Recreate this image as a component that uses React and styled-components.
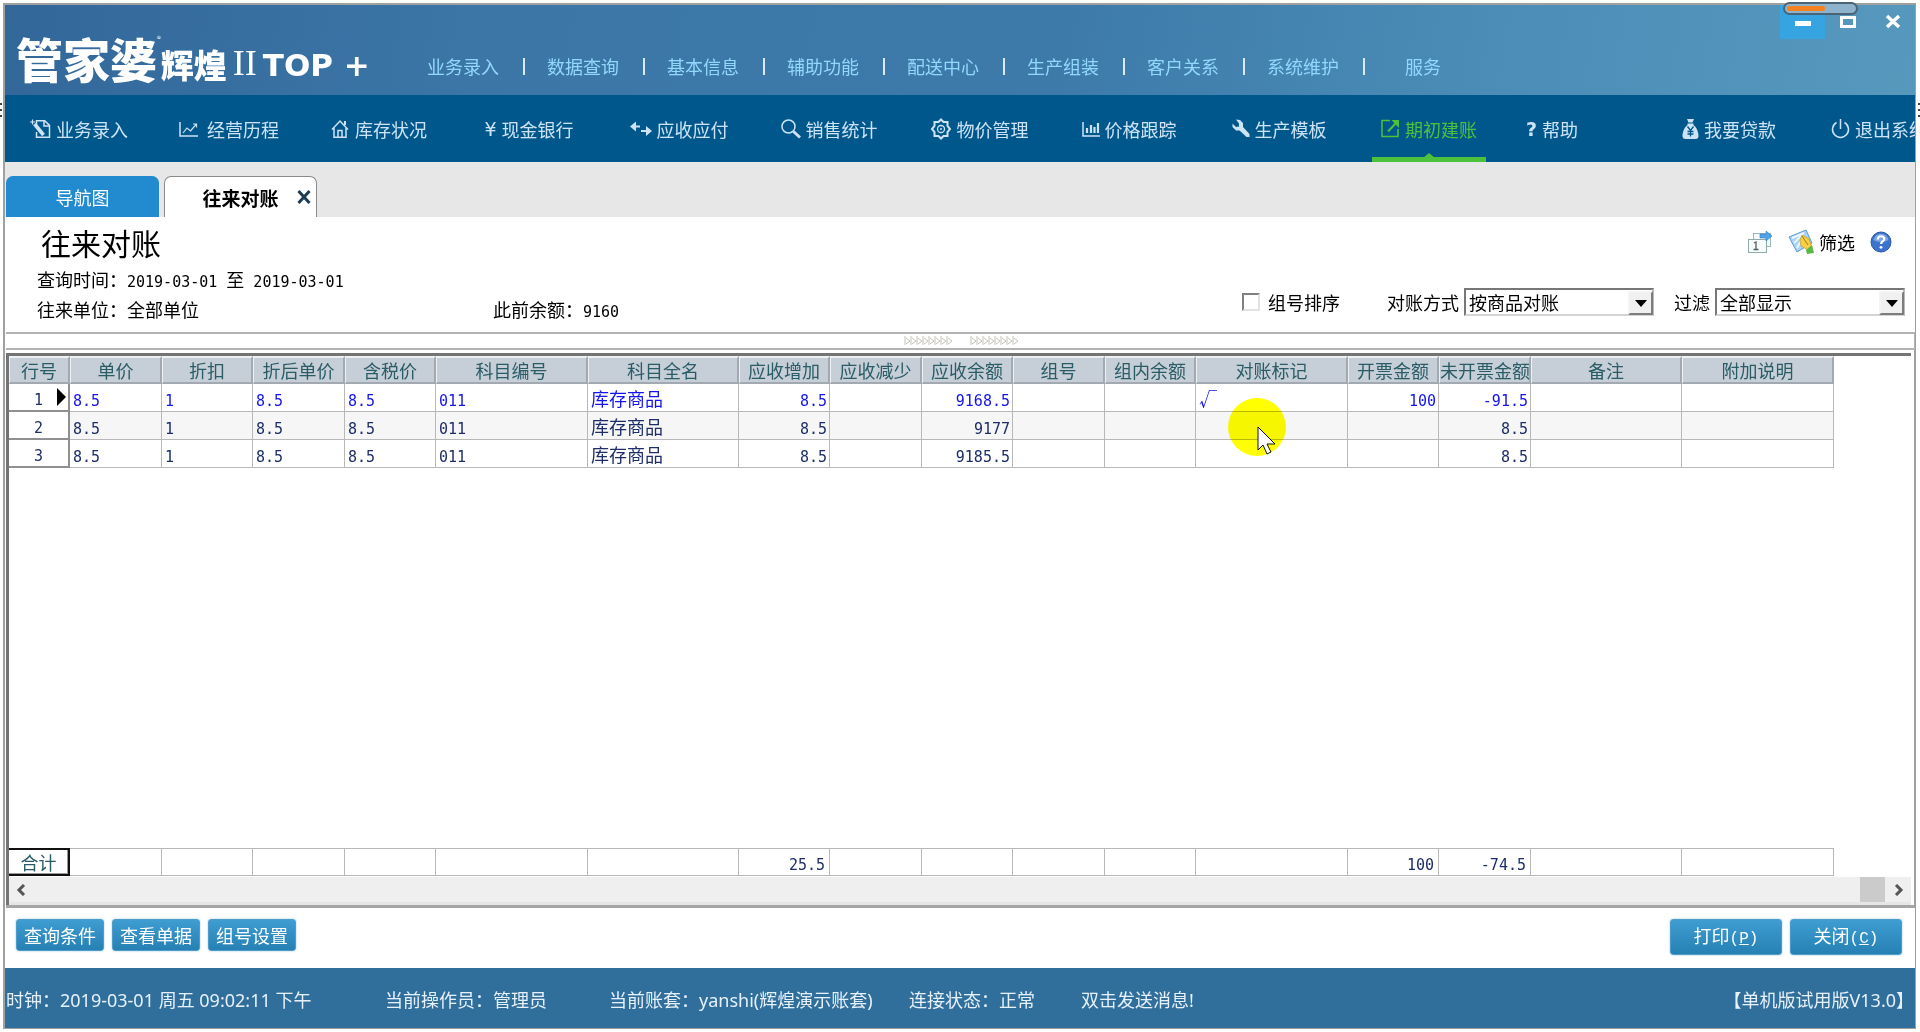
import { Fragment } from 'react';
import styled, { createGlobalStyle, css } from 'styled-components';

const GlobalStyle = createGlobalStyle`
  * {
    box-sizing: border-box;
  }

  body {
    margin: 0;
    background: #fff;
    color: #000;
    font-family: "Noto Sans CJK SC", sans-serif;
    font-size: 18px;
  }

  button, select, input {
    font: inherit;
    color: inherit;
  }
`;

const Page = styled.div`
  position: relative;
  display: flex;
  flex-direction: column;
  min-height: 100vh;
  padding: 3px 4px 3px 3px;
  overflow: hidden;
`;

const Window = styled.div`
  flex: 1;
  display: flex;
  flex-direction: column;
  min-width: 0;
  border: solid #a0a0a0;
  border-width: 2px 1px 1px 2px;
`;

/* Title bar */

const TitleBar = styled.header`
  display: flex;
  justify-content: space-between;
  height: 90px;
  background: linear-gradient(100deg, #33679a 0%, #3b76a7 25%, #3d7aaa 55%, #4b8db7 78%, #5798bd 100%);
`;

const Brand = styled.div`
  display: flex;
  align-items: flex-end;
  width: 422px;
  padding: 0 0 14px 11px;
  color: #fff;
  white-space: nowrap;
  line-height: 1;
`;

const BrandName = styled.span`
  font-size: 47px;
  font-weight: 900;
`;

const Registered = styled.sup`
  align-self: flex-start;
  margin-top: 30px;
  font-size: 8px;
`;

const BrandEdition = styled.span`
  font-size: 33px;
  font-weight: 900;
`;

const BrandNumeral = styled.span`
  padding: 0 6px;
  font-family: "Liberation Serif", serif;
  font-size: 36px;
`;

const BrandTop = styled.span`
  font-family: "DejaVu Sans", sans-serif;
  font-size: 31px;
  font-weight: bold;
`;

const MainMenu = styled.nav`
  display: flex;
  align-items: center;
  flex: 1;
  padding-top: 32px;
`;

const MenuLink = styled.a`
  min-width: 72px;
  color: #92d8fc;
  line-height: 24px;
  text-align: center;
  text-decoration: none;
  white-space: nowrap;
`;

const MenuDivider = styled.span`
  width: 2px;
  height: 17px;
  margin: 0 22px 0 24px;
  background: #d9e9f5;
`;

const WindowButtons = styled.div`
  display: flex;
  align-items: flex-start;
`;

const WindowButton = styled.button`
  display: flex;
  align-items: flex-end;
  justify-content: center;
  width: 45px;
  height: 34px;
  padding: 0 0 8px;
  border: 0;
  background: ${({ $active }) => ($active ? '#36a4e0' : 'transparent')};
`;

/* Toolbar */

const Toolbar = styled.nav`
  display: flex;
  gap: 36px;
  height: 67px;
  padding-left: 17px;
  background: #00578c;
  overflow: hidden;
`;

const Tool = styled.button`
  position: relative;
  display: flex;
  flex: none;
  align-items: center;
  justify-content: center;
  gap: 5px;
  width: ${({ $short }) => ($short ? '60px' : '114px')};
  margin-left: ${({ $apart }) => ($apart ? '54px' : '0')};
  padding: 0;
  border: 0;
  background: none;
  color: ${({ $active }) => ($active ? '#4cc23c' : '#cde4f6')};
  white-space: nowrap;

  ${({ $active }) => $active && css`
    box-shadow: inset 0 -5px #4cc23c;

    &::after {
      content: '';
      position: absolute;
      bottom: 4px;
      left: 50%;
      border: 6px solid transparent;
      border-top: 0;
      border-bottom: 5px solid #4cc23c;
      transform: translateX(-50%);
    }
  `}
`;

const ToolGlyph = styled.span`
  font-family: "DejaVu Sans", sans-serif;
  font-size: 19px;
  font-weight: ${({ $bold }) => ($bold ? 'bold' : 'normal')};
`;

/* Tabs */

const TabStrip = styled.div`
  display: flex;
  align-items: flex-end;
  gap: 5px;
  height: 55px;
  padding-left: 1px;
  background: #e7e7e7;
`;

const Tab = styled.div`
  display: flex;
  align-items: center;
  justify-content: center;
  gap: 18px;
  width: 153px;
  height: 41px;
  border-radius: 7px 7px 0 0;
  border: solid ${({ $active }) => ($active ? '#8a8a8a' : '#228bd0')};
  border-width: 1px 1px 0;
  padding-left: ${({ $active }) => ($active ? '32px' : '0')};
  background: ${({ $active }) => ($active ? '#fff' : '#228bd0')};
`;

const TabLabel = styled.button`
  padding: 0;
  border: 0;
  background: none;
  color: ${({ $active }) => ($active ? '#000' : '#fff')};
  font-size: ${({ $active }) => ($active ? '19px' : '18px')};
  font-weight: ${({ $active }) => ($active ? 'bold' : 'normal')};
  white-space: nowrap;
`;

const TabClose = styled.button`
  display: flex;
  padding: 0;
  border: 0;
  background: none;
  color: #1d3d54;
`;

/* Report heading */

const Report = styled.main`
  flex: 1;
  display: flex;
  flex-direction: column;
  min-width: 0;
`;

const ReportHead = styled.section`
  display: flex;
  justify-content: space-between;
  padding: 7px 10px 8px 32px;
`;

const ReportTitle = styled.h1`
  margin: 0 0 4px 4px;
  font-size: 30px;
  font-weight: 400;
  line-height: 36px;
`;

const InfoRow = styled.div`
  display: flex;
  height: 30px;
  line-height: 30px;
  white-space: nowrap;
`;

const Info = styled.span`
  min-width: 456px;
`;

const Num = styled.span`
  font-family: "DejaVu Sans Mono", monospace;
  font-size: 15px;
  line-height: 1;
`;

const HeadTools = styled.div`
  display: flex;
  flex-direction: column;
  align-items: flex-end;
  justify-content: space-between;
  padding-bottom: 8px;
`;

const IconActions = styled.div`
  display: flex;
  align-items: center;
  gap: 15px;
  height: 36px;
  padding-right: 13px;
`;

const IconAction = styled.button`
  display: flex;
  align-items: center;
  gap: 4px;
  padding: 0;
  border: 0;
  background: none;
`;

const Filters = styled.div`
  display: flex;
  align-items: center;
  gap: 20px;
`;

const FilterLabel = styled.label`
  display: flex;
  align-items: center;
  gap: ${({ $wide }) => ($wide ? '8px' : '5px')};
  margin-right: ${({ $wide }) => ($wide ? '27px' : '0')};
  white-space: nowrap;
`;

const Checkbox = styled.input`
  appearance: none;
  width: 18px;
  height: 18px;
  margin: 0;
  border: 2px solid;
  border-color: #808080 #e2e2e2 #e2e2e2 #808080;
  background: #fff;

  &:checked {
    background: #555;
  }
`;

const SelectBox = styled.span`
  position: relative;
  display: flex;
`;

const Select = styled.select`
  appearance: none;
  width: 190px;
  height: 28px;
  padding: 0 28px 0 3px;
  border: 2px solid;
  border-color: #777 #b9b9b9 #d5d5d5 #777;
  border-radius: 0;
  background: #fff;
  line-height: 24px;
`;

const SelectArrow = styled.span`
  position: absolute;
  top: 3px;
  right: 1px;
  bottom: 1px;
  display: flex;
  align-items: center;
  justify-content: center;
  width: 25px;
  border: 2px solid;
  border-color: #f4f4f4 #7c7c7c #7c7c7c #f4f4f4;
  background: #f0f0f0;
  pointer-events: none;
`;

const Splitter = styled.div`
  display: flex;
  align-items: center;
  justify-content: center;
  gap: 16px;
  height: 18px;
  padding-left: 3px;
  border: solid #b2b2b2;
  border-width: 2px 1px 2px 0;
  margin-left: 1px;
`;

/* Grid */

const GridFrame = styled.section`
  flex: 1;
  display: flex;
  flex-direction: column;
  min-width: 0;
  padding: 3px 3px 0 0;
  margin-left: 1px;
  border-right: 1px solid #a0a0a0;
  border-bottom: 3px solid #a5a5a5;
`;

const GridPanel = styled.div`
  flex: 1;
  display: flex;
  flex-direction: column;
  justify-content: space-between;
  min-width: 0;
  border: solid #747474;
  border-width: 3px 0 0 3px;
  overflow: hidden;
`;

const Table = styled.table`
  table-layout: fixed;
  width: 1825px;
  border-collapse: separate;
  border-spacing: 0;
`;

const HeadCell = styled.th`
  height: 28px;
  padding: 0;
  border: solid;
  border-width: 2px 2px 2px 1px;
  border-color: #eef1f4 #a3a9b0 #a3a9b0 #eef1f4;
  background: #c6ced8;
  color: #2a5c66;
  font-weight: 400;
  line-height: 24px;
  white-space: nowrap;
  overflow: hidden;
`;

const RowHead = styled.th`
  position: relative;
  height: 28px;
  padding: 0;
  border: solid #909090;
  border-width: 0 2px 2px 0;
  background: #fff;
  color: #1c2d68;
  font-weight: 400;
  line-height: 24px;
`;

const CurrentMark = styled.span`
  position: absolute;
  top: 4px;
  right: 2px;
  border: 9px solid transparent;
  border-right: 0;
  border-left: 9px solid #000;
`;

const Cell = styled.td`
  height: 28px;
  padding: 0 2px 0 3px;
  border: solid #b8b8b8;
  border-width: 0 1px 1px 0;
  text-align: ${({ $right }) => ($right ? 'right' : 'left')};
  line-height: 24px;
  white-space: nowrap;
`;

const Row = styled.tr`
  background: ${({ $shaded }) => ($shaded ? '#f6f6f6' : '#fff')};
  color: ${({ $current }) => ($current ? '#1414ee' : '#1c2d68')};
`;

const TotalCell = styled(Cell)`
  border-top-width: 1px;
  padding-right: 4px;
  color: #1c2d68;
`;

const TotalHead = styled.th`
  height: 28px;
  padding: 0;
  border: solid #111;
  border-width: 2px 2px 2px 0;
  box-shadow: inset -1px -1px #999;
  color: #2a5c66;
  font-weight: 400;
  line-height: 22px;
`;

const ScrollBar = styled.div`
  display: flex;
  align-items: center;
  height: 29px;
  padding: 0 7px;
  border-top: 1px solid #fff;
  border-bottom: 3px solid #e6e6e6;
  background: #efefef;
`;

const ScrollButton = styled.button`
  display: flex;
  padding: 0;
  border: 0;
  background: none;
`;

const ScrollTrack = styled.div`
  flex: 1;
  display: flex;
  justify-content: flex-end;
  align-self: stretch;
  padding-right: 9px;
`;

const ScrollThumb = styled.div`
  width: 25px;
  background: #cbcbcb;
`;

/* Bottom bars */

const ActionBar = styled.div`
  display: flex;
  align-items: flex-start;
  justify-content: space-between;
  height: 60px;
  padding: 11px 13px 0 11px;
`;

const ButtonGroup = styled.div`
  display: flex;
  gap: 8px;
`;

const ActionButton = styled.button`
  width: ${({ $large }) => ($large ? '112px' : '88px')};
  height: ${({ $large }) => ($large ? '36px' : '32px')};
  padding: 0;
  border: 1px solid #4d9dcb;
  border-radius: 3px;
  background: linear-gradient(#3f9dd2, #2680b3);
  box-shadow: 0 0 2px #8fbfdb;
  color: #fff;
  line-height: 28px;
  white-space: nowrap;
`;

const Key = styled.span`
  font-family: "Liberation Mono", monospace;
  font-size: 16px;
`;

const StatusBar = styled.footer`
  display: flex;
  align-items: center;
  height: 60px;
  padding: 2px 1px 0;
  background: #306e9c;
  color: #e6f1fa;
  font-family: "Noto Sans", "Noto Sans CJK SC", sans-serif;
  white-space: nowrap;
`;

const StatusItem = styled.span`
  width: ${({ $width }) => $width};
`;

const License = styled.span`
  margin-left: auto;
`;

/* Things floating above the window */

const Progress = styled.div`
  position: absolute;
  top: 2px;
  right: 62px;
  width: 75px;
  height: 13px;
  padding: 2px;
  border: 2px solid #4b6475;
  border-radius: 7px;
  background: #8fb2cc;
`;

const ProgressFill = styled.div`
  width: 56%;
  height: 5px;
  border-radius: 2px;
  background: #f58220;
`;

const Spotlight = styled.div`
  position: absolute;
  top: 398px;
  left: 1228px;
  width: 58px;
  height: 58px;
  border-radius: 50%;
  background: #ff0;
  mix-blend-mode: multiply;
`;

const Pointer = styled.svg`
  position: absolute;
  top: 426px;
  left: 1257px;
`;

const EdgeDots = styled.span`
  position: absolute;
  top: 103px;
  ${({ $side }) => $side}: 0;
  width: 2px;
  height: 15px;
  background: repeating-linear-gradient(#444 0 2px, transparent 2px 6px);
`;

/* Icons */

const line = { fill: 'none', stroke: 'currentColor', strokeWidth: 1.5 };

const FilePenIcon = () => (
  <svg width="21" height="20" viewBox="0 0 21 20" {...line}>
    <path d="M6.5 6V1.8h8.2l4.8 4.6v11.8h-13V13" />
    <path d="M14 2v5h5" />
    <path d="M4.5 5l9 11" strokeWidth="3.6" />
    <path d="M2.5.5v5M0 3h5" strokeWidth="1.2" />
  </svg>
);

const TrendIcon = () => (
  <svg width="23" height="18" viewBox="0 0 23 18" {...line}>
    <path d="M1 2v14h18" />
    <path d="M4 13l4-5 3.5 3L17 4.5M14 4h3.500v3.500" strokeWidth="1.200" />
  </svg>
);

const HomeIcon = () => (
  <svg width="19" height="20" viewBox="0 0 19 20" {...line}>
    <path d="M1 10.500L9 2l8 8.500M3 9v9.200h12V9" />
    <path d="M7 18v-6.500h4V18" />
    <path d="M14 2v4" strokeWidth="2" />
  </svg>
);

const TransferIcon = () => (
  <svg width="22" height="16" viewBox="0 0 22 16" fill="currentColor">
    <path d="M0 5.500L6 .5v4h4v2H6v4z" />
    <path d="M22 10l-6-5v4h-5v2h5v4z" />
  </svg>
);

const SearchIcon = () => (
  <svg width="20" height="20" viewBox="0 0 20 20" {...line}>
    <circle cx="7.500" cy="7.500" r="6.500" />
    <path d="M12.500 12.500l6.500 6" strokeWidth="3" />
  </svg>
);

const GearIcon = () => (
  <svg width="22" height="22" viewBox="0 0 22 22" {...line} strokeWidth="2">
    <path d="M11 1.500l2.500 2.500h4v4l2.500 3-2.500 3v4h-4L11 20.500 8.500 18h-4v-4L2 11l2.500-3V4h4z" />
    <circle cx="11" cy="11" r="3.500" strokeWidth="1.300" />
    <circle cx="11" cy="11" r="1" fill="currentColor" stroke="none" />
  </svg>
);

const BarsIcon = () => (
  <svg width="18" height="18" viewBox="0 0 18 18" {...line}>
    <path d="M1 2v14h17" />
    <path d="M5 13V8M9 13V5M12.500 13V7M16 13V3" strokeWidth="2.200" />
  </svg>
);

const WrenchIcon = () => (
  <svg width="18" height="19" viewBox="0 0 18 19" fill="currentColor">
    <path d="M4 .500l4 .500 3 3v4l6.500 7v3h-3L7.500 11.500H4L.500 8V4.500L4 8l3-.500V4.500z" />
  </svg>
);

const ExportIcon = () => (
  <svg width="19" height="19" viewBox="0 0 19 19" {...line}>
    <path d="M9 1.500H1v16h16V10" />
    <path d="M7 12.500L15 4" strokeWidth="2" />
    <path d="M10.500 1H18v8z" fill="currentColor" stroke="none" />
  </svg>
);

const MoneyBagIcon = () => (
  <svg width="17" height="20" viewBox="0 0 17 20">
    <path d="M5 0h7l-1.500 3.500h-4zM5.500 4.500h6V6c3 2 5 7 5 11 0 2-1 3-3 3h-10c-2 0-3-1-3-3 0-4 2-9 5-11z" fill="currentColor" />
    <path d="M5.500 7.500l3 4 3-4M8.500 11v6.500M5.500 12.500h6M5.500 15h6" fill="none" stroke="#00578c" strokeWidth="1.300" />
  </svg>
);

const PowerIcon = () => (
  <svg width="19" height="20" viewBox="0 0 19 20" {...line}>
    <path d="M5.500 3.500a8 8 0 1 0 8 0M9.500 0v10" />
  </svg>
);

const CrossIcon = ({ size, weight }) => (
  <svg width={size} height={size} viewBox="0 0 14 14" fill="none" stroke="currentColor" strokeWidth={weight}>
    <path d="M1.500 1l11 12M12.500 1l-11 12" />
  </svg>
);

const CalendarIcon = () => (
  <svg width="26" height="24" viewBox="0 0 26 24">
    <rect x="6.500" y="3.500" width="17" height="13" fill="#f4faf8" stroke="#9cb7b9" />
    <rect x="1.500" y="9.500" width="18" height="13" fill="#f7fbfa" stroke="#8fabac" />
    <path d="M7 13l2-1v7M6.500 19.500h5" fill="none" stroke="#4b5f63" strokeWidth="1.300" />
    <path d="M13 4h6V1l6 5-6 5V8h-6z" fill="#4da3e6" stroke="#2c7cc4" strokeWidth=".6" />
  </svg>
);

const FilterIcon = () => (
  <svg width="27" height="26" viewBox="0 0 27 26">
    <path d="M1 8l17-7 6 13-15 9z" fill="#a9d4f5" stroke="#5d9bd6" />
    <path d="M4 9l12-5M6 14l9-9M9 19l4-7" stroke="#e9f6ff" strokeWidth="2" />
    <path d="M14 6l7 4 3 8-4 3-7-4-1-6z" fill="#f6cf45" stroke="#c99622" strokeWidth=".7" />
    <path d="M14 7l6 9" stroke="#a8761a" />
    <path d="M18 21l6-5 2 8-7 1z" fill="#58b848" />
  </svg>
);

const HelpIcon = () => (
  <svg width="22" height="22" viewBox="0 0 22 22">
    <circle cx="11" cy="11" r="10" fill="#3b74cf" stroke="#2a56a6" />
    <path d="M3.500 9a7.600 7.600 0 0 1 15 0c-4 2.500-11 2.500-15 0z" fill="#7ba5e6" />
    <path d="M7.800 8.500c0-4.500 6.500-4 6.500-.6 0 2.300-3.200 2.300-3.200 5" fill="none" stroke="#fff" strokeWidth="2.200" />
    <circle cx="11" cy="16.300" r="1.400" fill="#fff" />
  </svg>
);

const Grip = () => (
  <svg width="50" height="10" viewBox="0 0 50 10" fill="none" stroke="#c3c1b8">
    {[0, 6, 12, 18, 24, 30, 36, 42].map((x) => (
      <path key={x} d={`M${x + 1} 0v9M${x + 2} 2l4 3-4 3`} />
    ))}
  </svg>
);

const Chevron = ({ left }) => (
  <svg width="10" height="12" viewBox="0 0 10 12" fill="none" stroke="#555" strokeWidth="3">
    <path d={left ? 'M8 1L3 6l5 5' : 'M2 1l5 5-5 5'} />
  </svg>
);

/* Data */

const menu = ['业务录入', '数据查询', '基本信息', '辅助功能', '配送中心', '生产组装', '客户关系', '系统维护', '服务'];

const tools = [
  { label: '业务录入', icon: <FilePenIcon /> },
  { label: '经营历程', icon: <TrendIcon /> },
  { label: '库存状况', icon: <HomeIcon /> },
  { label: '现金银行', icon: <ToolGlyph>¥</ToolGlyph> },
  { label: '应收应付', icon: <TransferIcon /> },
  { label: '销售统计', icon: <SearchIcon /> },
  { label: '物价管理', icon: <GearIcon /> },
  { label: '价格跟踪', icon: <BarsIcon /> },
  { label: '生产模板', icon: <WrenchIcon /> },
  { label: '期初建账', icon: <ExportIcon />, active: true },
  { label: '帮助', icon: <ToolGlyph $bold>?</ToolGlyph>, short: true },
  { label: '我要贷款', icon: <MoneyBagIcon />, apart: true },
  { label: '退出系统', icon: <PowerIcon /> },
];

const columns = [
  { key: 'price', title: '单价', width: 92 },
  { key: 'discount', title: '折扣', width: 91 },
  { key: 'netPrice', title: '折后单价', width: 92 },
  { key: 'taxPrice', title: '含税价', width: 91 },
  { key: 'code', title: '科目编号', width: 152 },
  { key: 'name', title: '科目全名', width: 151, text: true },
  { key: 'increase', title: '应收增加', width: 91, right: true },
  { key: 'decrease', title: '应收减少', width: 92, right: true },
  { key: 'balance', title: '应收余额', width: 91, right: true },
  { key: 'group', title: '组号', width: 92 },
  { key: 'groupBalance', title: '组内余额', width: 91, right: true },
  { key: 'mark', title: '对账标记', width: 152, text: true },
  { key: 'invoiced', title: '开票金额', width: 91, right: true },
  { key: 'uninvoiced', title: '未开票金额', width: 92, right: true },
  { key: 'remark', title: '备注', width: 151 },
  { key: 'note', title: '附加说明', width: 152 },
];

const base = { price: '8.5', discount: '1', netPrice: '8.5', taxPrice: '8.5', code: '011', name: '库存商品', increase: '8.5' };

const rows = [
  { ...base, balance: '9168.5', mark: '√', invoiced: '100', uninvoiced: '-91.5' },
  { ...base, balance: '9177', uninvoiced: '8.5' },
  { ...base, balance: '9185.5', uninvoiced: '8.5' },
];

const totals = { increase: '25.5', invoiced: '100', uninvoiced: '-74.5' };

const Columns = () => (
  <colgroup>
    <col width="61" />
    {columns.map((c) => <col key={c.key} width={c.width} />)}
  </colgroup>
);

function DataGrid() {
  return (
    <GridPanel>
      <Table>
        <Columns />
        <thead>
          <tr>
            <HeadCell scope="col">行号</HeadCell>
            {columns.map((c) => <HeadCell key={c.key} scope="col">{c.title}</HeadCell>)}
          </tr>
        </thead>
        <tbody>
          {rows.map((row, i) => (
            <Row key={i} $current={i === 0} $shaded={i === 1}>
              <RowHead scope="row">
                <Num>{i + 1}</Num>
                {i === 0 && <CurrentMark />}
              </RowHead>
              {columns.map((c) => (
                <Cell key={c.key} $right={c.right}>
                  {c.text ? row[c.key] : <Num>{row[c.key]}</Num>}
                </Cell>
              ))}
            </Row>
          ))}
        </tbody>
      </Table>
      <div>
        <Table>
          <Columns />
          <tbody>
            <tr>
              <TotalHead scope="row">合计</TotalHead>
              {columns.map((c) => (
                <TotalCell key={c.key} $right={c.right}><Num>{totals[c.key]}</Num></TotalCell>
              ))}
            </tr>
          </tbody>
        </Table>
        <ScrollBar>
          <ScrollButton aria-label="向左滚动"><Chevron left /></ScrollButton>
          <ScrollTrack><ScrollThumb /></ScrollTrack>
          <ScrollButton aria-label="向右滚动"><Chevron /></ScrollButton>
        </ScrollBar>
      </div>
    </GridPanel>
  );
}

const DropDown = ({ id, value }) => (
  <SelectBox>
    <Select id={id} defaultValue={value}>
      <option>{value}</option>
    </Select>
    <SelectArrow>
      <svg width="12" height="7" viewBox="0 0 12 7"><path d="M0 0h12L6 7z" /></svg>
    </SelectArrow>
  </SelectBox>
);

export default function App() {
  return (
    <Page>
      <GlobalStyle />
      <Window>
        <TitleBar>
          <Brand>
            <BrandName>管家婆</BrandName>
            <Registered>®</Registered>
            <BrandEdition>辉煌</BrandEdition>
            <BrandNumeral>II</BrandNumeral>
            <BrandTop>TOP +</BrandTop>
          </Brand>
          <MainMenu>
            {menu.map((name, i) => (
              <Fragment key={name}>
                {i > 0 && <MenuDivider />}
                <MenuLink href="#">{name}</MenuLink>
              </Fragment>
            ))}
          </MainMenu>
          <WindowButtons>
            <WindowButton $active aria-label="最小化">
              <svg width="16" height="18" viewBox="0 0 16 18"><path d="M0 8h16v5H0z" fill="#fff" /></svg>
            </WindowButton>
            <WindowButton aria-label="最大化">
              <svg width="16" height="18" viewBox="0 0 16 18"><path d="M1.500 4.500h13v9h-13z" fill="none" stroke="#fff" strokeWidth="3" /></svg>
            </WindowButton>
            <WindowButton aria-label="关闭">
              <svg width="16" height="18" viewBox="0 0 16 18"><path d="M2 3l12 11M14 3L2 14" fill="none" stroke="#fff" strokeWidth="3.500" /></svg>
            </WindowButton>
          </WindowButtons>
        </TitleBar>

        <Toolbar>
          {tools.map((t) => (
            <Tool key={t.label} $active={t.active} $short={t.short} $apart={t.apart}>
              {t.icon}
              {t.label}
            </Tool>
          ))}
        </Toolbar>

        <TabStrip>
          <Tab>
            <TabLabel>导航图</TabLabel>
          </Tab>
          <Tab $active>
            <TabLabel $active>往来对账</TabLabel>
            <TabClose aria-label="关闭标签"><CrossIcon size={14} weight={3} /></TabClose>
          </Tab>
        </TabStrip>

        <Report>
          <ReportHead>
            <div>
              <ReportTitle>往来对账</ReportTitle>
              <InfoRow>
                <Info>查询时间：<Num>2019-03-01 </Num>至<Num> 2019-03-01</Num></Info>
              </InfoRow>
              <InfoRow>
                <Info>往来单位：全部单位</Info>
                <span>此前余额：<Num>9160</Num></span>
              </InfoRow>
            </div>
            <HeadTools>
              <IconActions>
                <IconAction aria-label="日期"><CalendarIcon /></IconAction>
                <IconAction><FilterIcon />筛选</IconAction>
                <IconAction aria-label="帮助说明"><HelpIcon /></IconAction>
              </IconActions>
              <Filters>
                <FilterLabel $wide>
                  <Checkbox type="checkbox" />
                  组号排序
                </FilterLabel>
                <FilterLabel htmlFor="mode">
                  对账方式
                  <DropDown id="mode" value="按商品对账" />
                </FilterLabel>
                <FilterLabel htmlFor="filter">
                  过滤
                  <DropDown id="filter" value="全部显示" />
                </FilterLabel>
              </Filters>
            </HeadTools>
          </ReportHead>

          <Splitter>
            <Grip />
            <Grip />
          </Splitter>

          <GridFrame>
            <DataGrid />
          </GridFrame>

          <ActionBar>
            <ButtonGroup>
              <ActionButton>查询条件</ActionButton>
              <ActionButton>查看单据</ActionButton>
              <ActionButton>组号设置</ActionButton>
            </ButtonGroup>
            <ButtonGroup>
              <ActionButton $large>打印<Key>(<u>P</u>)</Key></ActionButton>
              <ActionButton $large>关闭<Key>(<u>C</u>)</Key></ActionButton>
            </ButtonGroup>
          </ActionBar>
        </Report>

        <StatusBar>
          <StatusItem $width="379px">时钟：2019-03-01 周五 09:02:11 下午</StatusItem>
          <StatusItem $width="224px">当前操作员：管理员</StatusItem>
          <StatusItem $width="300px">当前账套：yanshi(辉煌演示账套)</StatusItem>
          <StatusItem $width="172px">连接状态：正常</StatusItem>
          <StatusItem $width="auto">双击发送消息!</StatusItem>
          <License>【单机版试用版V13.0】</License>
        </StatusBar>
      </Window>

      <EdgeDots $side="left" />
      <EdgeDots $side="right" />
      <Progress>
        <ProgressFill />
      </Progress>
      <Spotlight />
      <Pointer width="19" height="29" viewBox="0 0 19 29">
        <path d="M1 1v23l5-5 4 9 4-2-4-8h8z" fill="#fff" stroke="#111" />
      </Pointer>
    </Page>
  );
}
